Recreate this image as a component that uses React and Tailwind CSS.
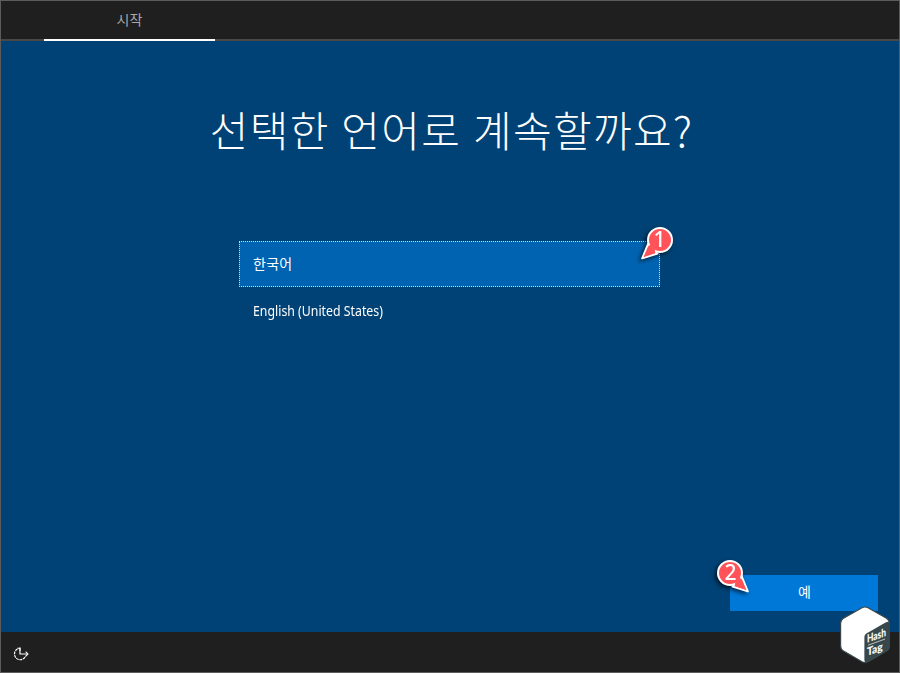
const languages = [
  { id: "ko", label: "한국어" },
  { id: "en", label: "English (United States)" },
];

function Marker({ number, flip = false, className = "" }) {
  return (
    <svg
      viewBox="0 0 40 40"
      className={`absolute z-10 h-10 w-10 overflow-visible ${className}`}
      style={{ filter: "drop-shadow(-2px 2px 2px rgba(0,0,0,.65))" }}
    >
      <g
        transform={flip ? "translate(40 0) scale(-1 1)" : undefined}
        fill="#ff5359"
        stroke="#fff"
        strokeWidth="2"
        strokeLinejoin="round"
      >
        <path d="M10 18 L4.2 32.4 L19.5 27.5 Q17.5 27 16.5 25 Q13 23.5 12.5 19.5 Q10.5 19.5 10 18 Z" />
        <circle cx="22" cy="14" r="12" />
        <path d="M10.6 20 L5.6 31 L17.5 27 Q16.5 25.5 17 24 L12.8 18.6 Z" stroke="none" />
      </g>
      <text
        x={flip ? 18.5 : 21.6}
        y="21.4"
        fill="#fff"
        fontFamily="'Noto Sans', sans-serif"
        fontSize="21"
        fontWeight="500"
        textAnchor="middle"
      >
        {number}
      </text>
    </svg>
  );
}

function HashTagLogo() {
  return (
    <svg
      viewBox="0 0 50 58"
      className="absolute top-[605px] left-[839px] z-10 h-[58px] w-[50px] overflow-visible"
    >
      <path
        d="M22 1.8 Q25 .2 28 1.8 L46.5 12.3 Q49.4 14 49.4 17.3 V40 Q49.4 43.2 46.5 45 L28 55.8 Q25 57.4 22 55.8 L3.5 45 Q.6 43.2 .6 40 V17.3 Q.6 14 3.5 12.3 Z"
        fill="#fff"
        stroke="#37474b"
        strokeWidth="1.2"
      />
      <path
        d="M24.4 31 Q24.4 28.6 26.4 27.4 L46 16.3 Q49.4 14.4 49.4 18 V40 Q49.4 43.2 46.5 45 L28 55.8 Q24.4 57.6 24.4 54 Z"
        fill="#37474b"
      />
      <g
        transform="translate(27 36.8) skewY(-20)"
        fill="#fff"
        stroke="#fff"
        strokeWidth=".15"
        fontFamily="Lato, sans-serif"
        fontSize="11"
        fontWeight="700"
      >
        <text x="0" y="0" textLength="19" lengthAdjust="spacingAndGlyphs">Hash</text>
        <path d="M1 2.8 H18" strokeWidth=".6" />
        <text x="0" y="13" textLength="15.5" lengthAdjust="spacingAndGlyphs">Tag</text>
      </g>
    </svg>
  );
}

export default function App() {
  return (
    <div className="relative flex h-[673px] w-[900px] flex-col overflow-hidden border border-[#5c5c5c] bg-[#004275] font-['Noto_Sans','Noto_Sans_CJK_KR',sans-serif] text-white">
      <header className="flex h-10 shrink-0 border-b-2 border-[#4b4744] bg-[#1f1f1f] pl-[43px]">
        <div className="flex h-10 w-[171px] justify-center border-b-2 border-white pt-[9px] text-sm leading-5 text-[#a8a8a8]">
          시작
        </div>
      </header>

      <main className="flex grow flex-col">
        <h1 className="mt-[58px] pl-[3px] text-center font-['Noto_Sans_CJK_KR',sans-serif] text-[42px] leading-[60px] font-light tracking-[1.35px] [word-spacing:1px] whitespace-nowrap">
          선택한 언어로 계속할까요?
        </h1>

        <ul className="mt-[82px] ml-[238px] w-[421px] text-sm">
          {languages.map((lang, i) => (
            <li
              key={lang.id}
              className={`flex items-center border px-[13px] ${
                i === 0
                  ? "h-[46px] border-dotted border-white/80 bg-[#0063b1]"
                  : "h-12 border-transparent"
              }`}
            >
              <span className={i === 0 ? "tracking-[0.3px]" : "origin-left scale-x-[0.88]"}>
                {lang.label}
              </span>
            </li>
          ))}
        </ul>

        <button className="mt-auto mr-[21px] mb-[21px] h-9 w-[148px] self-end bg-[#0078d7] pb-0.5 pl-px text-sm">
          예
        </button>
      </main>

      <footer className="flex h-10 shrink-0 items-center bg-[#1f1f1f] pl-[11px]">
        <svg viewBox="0 0 16 16" className="mt-1 h-[17px] w-[17px]" fill="none" stroke="#fff" strokeWidth="1.1">
          <path
            d="M5.1 2.8 A5.4 5.4 0 1 0 12.8 9.4"
            strokeDasharray="2.6 .7"
          />
          <path d="M7.5 1.5 V7.5 H15" />
          <path d="M5 2.2 H7.5 V4.5 M12.8 5.3 L15 7.5 L12.8 9.7" strokeWidth="1" />
        </svg>
      </footer>

      <Marker number="1" className="top-[225px] left-[637px]" />
      <Marker number="2" flip className="top-[558px] left-[711px]" />
      <HashTagLogo />
    </div>
  );
}
